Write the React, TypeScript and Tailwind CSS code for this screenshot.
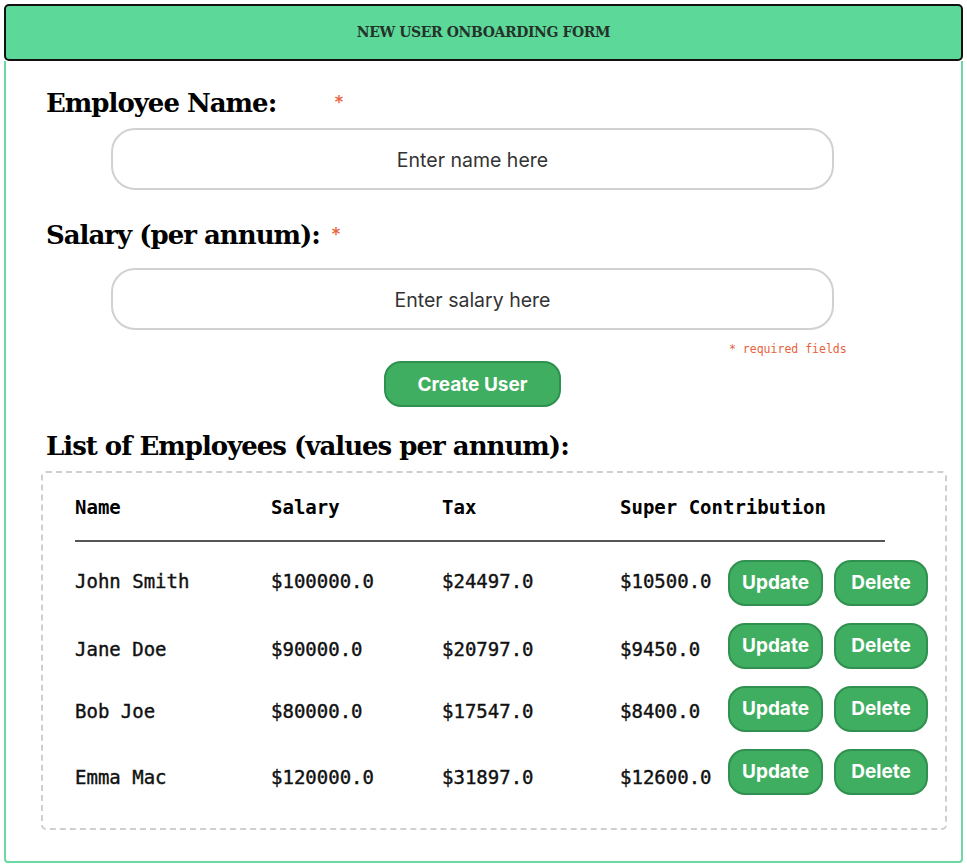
import React from "react";

const serif = { fontFamily: '"DejaVu Serif", "Liberation Serif", serif' };

const rows = [
  { name: "John Smith", salary: "$100000.0", tax: "$24497.0", sup: "$10500.0", off: "mt-[-2px]" },
  { name: "Jane Doe", salary: "$90000.0", tax: "$20797.0", sup: "$9450.0", off: "mt-[8px]" },
  { name: "Bob Joe", salary: "$80000.0", tax: "$17547.0", sup: "$8400.0", off: "mt-[6px]" },
  { name: "Emma Mac", salary: "$120000.0", tax: "$31897.0", sup: "$12600.0", off: "mt-[11px]" },
];

function GreenButton({ children, w }: { children: React.ReactNode; w: string }) {
  return (
    <button
      className={`${w} h-[46px] pt-[2px] rounded-[17px] border-2 border-[#30904f] bg-[#3fae61] text-white text-[19px] font-bold font-['Inter',sans-serif] flex items-center justify-center`}
    >
      {children}
    </button>
  );
}

export default function App() {
  return (
    <div className="w-[967px] h-[868px] bg-white p-[4px] font-['Inter',sans-serif]">
      <div className="flex flex-col w-[959px] h-[859px]">
        <div className="h-[57px] rounded-[5px] border-2 border-[#111] bg-[#5cd899] flex items-center justify-center">
          <span className="text-[14px] font-bold text-[#24332a] tracking-[-0.4px]" style={serif}>
            NEW USER ONBOARDING FORM
          </span>
        </div>
        <div className="flex-1 border-x-2 border-b-2 border-[#6ad9a2] rounded-b-[4px] pl-[40px] flex flex-col">
          <div className="w-[853px] flex flex-col">
            <div className="mt-[24px] h-[36px] flex items-center">
              <span className="w-[288px] whitespace-nowrap text-[26px] tracking-[-1px] font-bold text-black leading-[36px]" style={serif}>
                Employee Name:
              </span>
              <span className="text-[#e8613c] text-[20px]">*</span>
            </div>
            <div className="mt-[7px] ml-[65px] w-[723px] h-[62px] pt-[3px] rounded-[24px] border-2 border-[#d1d1d1] flex items-center justify-center text-[19.5px] text-[#333]">
              Enter name here
            </div>
            <div className="mt-[27px] h-[36px] flex items-center">
              <span className="w-[285px] whitespace-nowrap text-[26px] tracking-[-1px] font-bold text-black leading-[36px]" style={serif}>
                Salary (per annum):
              </span>
              <span className="text-[#e8613c] text-[20px]">*</span>
            </div>
            <div className="mt-[15px] ml-[65px] w-[723px] h-[62px] pt-[3px] rounded-[24px] border-2 border-[#d1d1d1] flex items-center justify-center text-[19.5px] text-[#333]">
              Enter salary here
            </div>
            <div className="mt-[12px] ml-[683px] h-[14px] leading-[14px] text-[11.5px] text-[#e8613c] font-['DejaVu_Sans_Mono',monospace]">
              * required fields
            </div>
            <div className="mt-[5px] flex justify-center">
              <GreenButton w="w-[177px]">Create User</GreenButton>
            </div>
            <div className="mt-[21px] h-[36px] flex items-center">
              <span className="whitespace-nowrap text-[26px] tracking-[-1px] font-bold text-black leading-[36px]" style={serif}>
                List of Employees (values per annum):
              </span>
            </div>
          </div>
          <div className="mt-[7px] ml-[-5px] w-[906px] rounded-[5px] border-2 border-dashed border-[#cfcfcf] pl-[32px] pt-[22px] pb-[25px] font-['DejaVu_Sans_Mono',monospace] text-[19px] text-[#111]">
            <div className="flex h-[24px] items-center font-bold text-black">
              <span className="w-[196px]">Name</span>
              <span className="w-[171px]">Salary</span>
              <span className="w-[178px]">Tax</span>
              <span>Super Contribution</span>
            </div>
            <div className="mt-[21px] w-[810px] h-[2px] bg-[#555]" />
            <div className="mt-[9px] flex flex-col">
              {rows.map((r) => (
                <div key={r.name} className="flex h-[63px] items-center">
                  <div className={`flex ${r.off} [-webkit-text-stroke:0.4px_#111]`}>
                    <span className="w-[196px]">{r.name}</span>
                    <span className="w-[171px]">{r.salary}</span>
                    <span className="w-[178px]">{r.tax}</span>
                    <span className="w-[108px]">{r.sup}</span>
                  </div>
                  <div className="flex gap-[11px]">
                    <GreenButton w="w-[95px]">Update</GreenButton>
                    <GreenButton w="w-[94px]">Delete</GreenButton>
                  </div>
                </div>
              ))}
            </div>
          </div>
        </div>
      </div>
    </div>
  );
}
